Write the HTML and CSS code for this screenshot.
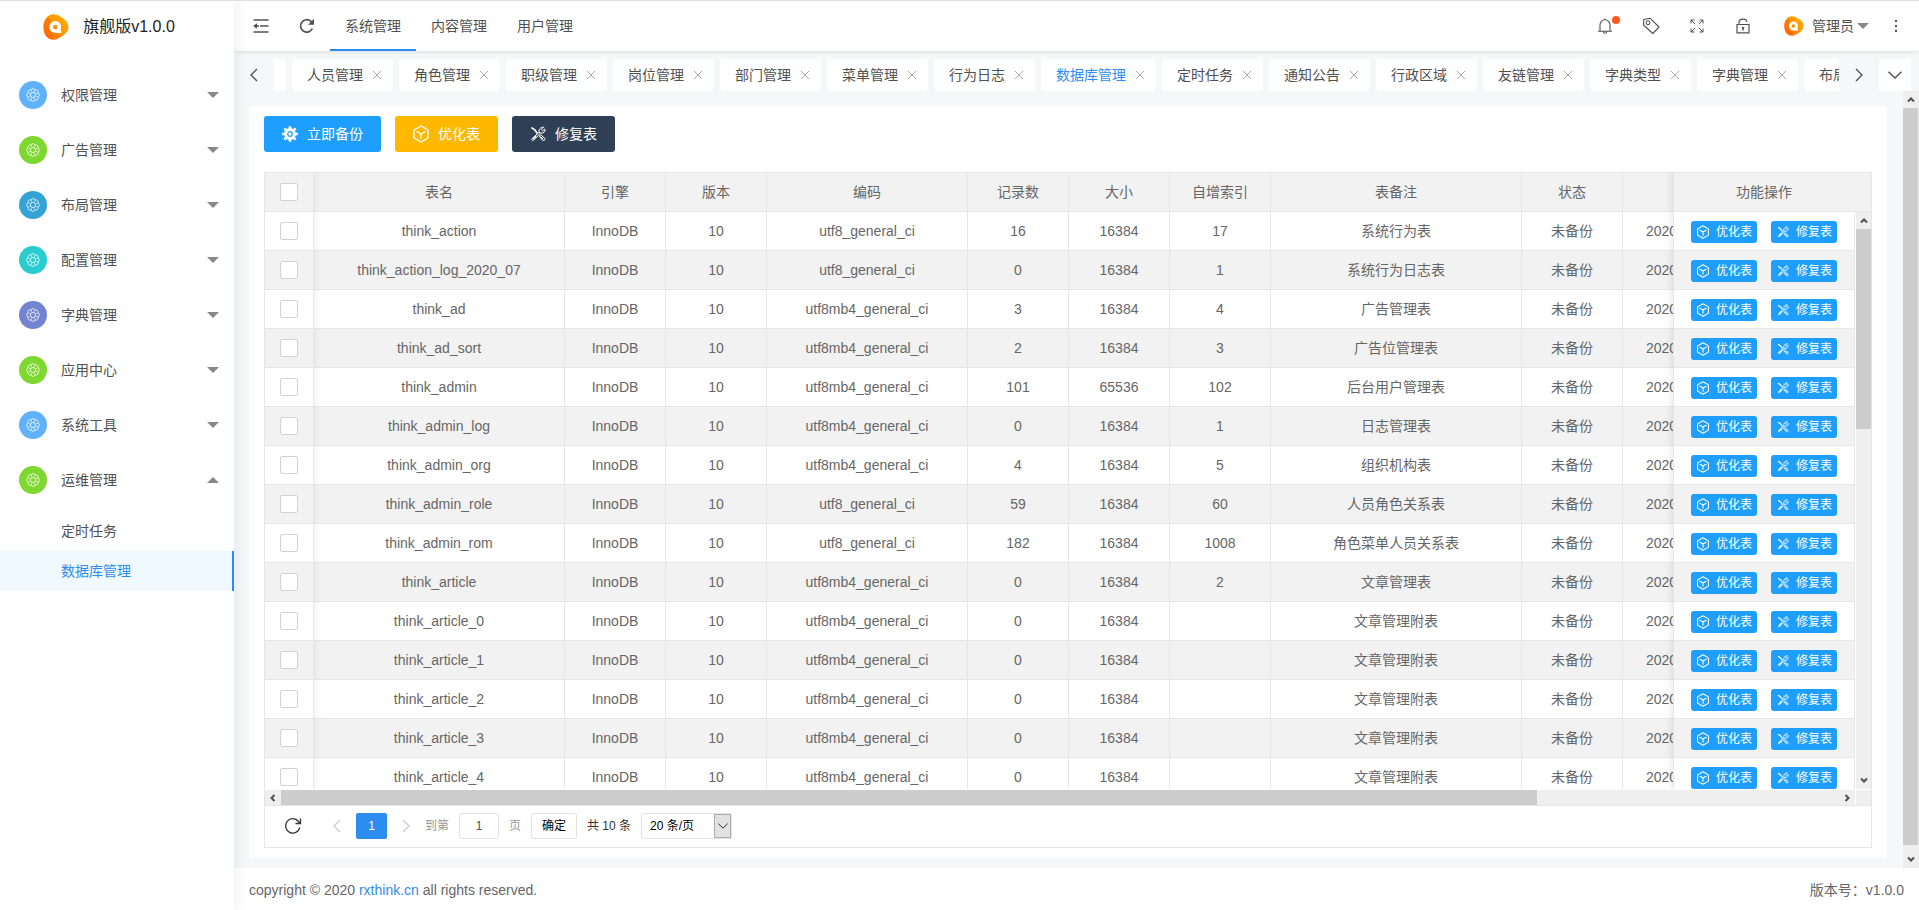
FILE: index.html
```html
<!DOCTYPE html>
<html lang="zh-CN">
<head>
<meta charset="utf-8">
<title>数据库管理</title>
<link rel="stylesheet" href="styles.css">
</head>
<body>
<svg class="sprite" aria-hidden="true">
  <defs>
    <linearGradient id="flame" x1="1" y1="0" x2="0" y2="1">
      <stop offset="0" stop-color="#ffb400"/><stop offset="0.5" stop-color="#ff9400"/><stop offset="1" stop-color="#ff5a00"/>
    </linearGradient>
    <symbol id="logo" viewBox="0 0 26 26">
      <path d="M10 .3C13 .1 16 1.600 20 4.200 23.500 6.600 25.500 9.500 25.500 12.800c0 3.400-2 6.200-5.500 8.800-3.600 2.700-7 4.400-10 4.200-5-.3-9.500-4.800-9.500-12.800S5 .6 10 .3z" fill="url(#flame)"/>
      <path d="M2.500 6C6 2 9 5 7 10c-1.800 4.500-.5 9.500 4 11l-3 4.500C3 24 .500 19.500.500 13c0-2.800.8-5.200 2-7z" fill="#ff6a00" opacity=".55"/>
      <circle cx="12.300" cy="13" r="4.100" fill="none" stroke="#fff" stroke-width="3.600"/>
      <path d="M12.500 16.300h5.800v2.600h-5.800z" fill="#fff"/>
    </symbol>
    <symbol id="flower" viewBox="0 0 16 16">
      <g fill="none" stroke="currentColor" stroke-width=".9">
        <path d="M13.540 10.300A2.400 2.400 0 0 1 10.300 13.540 2.400 2.400 0 0 1 5.700 13.540 2.400 2.400 0 0 1 2.460 10.300 2.400 2.400 0 0 1 2.460 5.700 2.400 2.400 0 0 1 5.700 2.460 2.400 2.400 0 0 1 10.300 2.460 2.400 2.400 0 0 1 13.540 5.700 2.400 2.400 0 0 1 13.540 10.300z"/>
        <circle cx="8" cy="8" r="3"/>
        <path d="M11.200 9.300l2.300 1M9.300 11.200l1 2.300M6.700 11.200l-1 2.300M4.800 9.300l-2.300 1M4.800 6.700l-2.300-1M6.700 4.800l-1-2.300M9.300 4.800l1-2.300M11.200 6.700l2.300-1" opacity=".7"/>
      </g>
    </symbol>
    <symbol id="gear" viewBox="0 0 16 16">
      <g fill="none" stroke="currentColor">
        <circle cx="8" cy="8" r="4.400" stroke-width="3"/>
        <path stroke-width="2.600" d="M8 .2v3M8 12.800v3M.2 8h3M12.800 8h3M2.400 2.400l2.200 2.200M11.400 11.400l2.200 2.200M2.400 13.600l2.200-2.200M11.400 4.600l2.200-2.200"/>
      </g>
      <circle cx="8" cy="8" r="1.700" fill="currentColor"/>
    </symbol>
    <symbol id="cube" viewBox="0 0 16 18">
      <g fill="none" stroke="currentColor" stroke-width="1.400" stroke-linejoin="round" stroke-linecap="round">
        <path d="M8 1l7 4v8l-7 4-7-4V5z"/><path d="M4 6.700L8 9l4-2.300M8 9v4.200"/>
      </g>
    </symbol>
    <symbol id="tools" viewBox="0 0 16 16">
      <g fill="none" stroke="currentColor" stroke-linecap="round" stroke-width="1">
        <path stroke-width="1.700" d="M2 2l2.800 1.800L7 7"/>
        <path d="M9.500 9.800l1.300-1 4 3.700c.8 1.200-.8 2.700-2 2z"/>
        <path d="M11 11l2 2"/>
        <path d="M9 6.300L2 12.800c-1 1 .5 2.500 1.500 1.500L10 7.500M13.200 1.200l-2 2.300 1.300 1.300L14.900 3c.5 2.400-1.200 4.300-3.700 4.200L9 6.300C8.500 3.500 10.500 1 13.200 1.200z"/>
        <path d="M5.600 10.200L3.500 12.500" stroke-width="1.700"/>
      </g>
    </symbol>
    <symbol id="cross" viewBox="0 0 10 10"><path d="M1 1l8 8M9 1L1 9" fill="none" stroke="currentColor"/></symbol>
    <symbol id="left" viewBox="0 0 8 14"><path d="M7 1L1 7l6 6" fill="none" stroke="currentColor" stroke-width="1.400"/></symbol>
    <symbol id="right" viewBox="0 0 8 14"><path d="M1 1l6 6-6 6" fill="none" stroke="currentColor" stroke-width="1.400"/></symbol>
    <symbol id="down" viewBox="0 0 14 8"><path d="M.5.700L7 7 13.500.700" fill="none" stroke="currentColor" stroke-width="1.400"/></symbol>
    <symbol id="caret" viewBox="0 0 12 6"><path d="M0 0h12L6 6z" fill="currentColor"/></symbol>
    <symbol id="chevron" viewBox="0 0 8 6"><path d="M1 4.500l3-3 3 3" fill="none" stroke="currentColor" stroke-width="2"/></symbol>
  </defs>
</svg>

<div class="app">
  <aside class="sidebar">
    <div class="brand"><svg class="brand-logo"><use href="#logo"/></svg><span>旗舰版v1.0.0</span></div>
    <nav class="menu">
      <a class="menu-item" href="#"><i class="dot sky"><svg><use href="#flower"/></svg></i><span>权限管理</span><svg class="caret"><use href="#caret"/></svg></a>
      <a class="menu-item" href="#"><i class="dot green"><svg><use href="#flower"/></svg></i><span>广告管理</span><svg class="caret"><use href="#caret"/></svg></a>
      <a class="menu-item" href="#"><i class="dot ocean"><svg><use href="#flower"/></svg></i><span>布局管理</span><svg class="caret"><use href="#caret"/></svg></a>
      <a class="menu-item" href="#"><i class="dot cyan"><svg><use href="#flower"/></svg></i><span>配置管理</span><svg class="caret"><use href="#caret"/></svg></a>
      <a class="menu-item" href="#"><i class="dot violet"><svg><use href="#flower"/></svg></i><span>字典管理</span><svg class="caret"><use href="#caret"/></svg></a>
      <a class="menu-item" href="#"><i class="dot green"><svg><use href="#flower"/></svg></i><span>应用中心</span><svg class="caret"><use href="#caret"/></svg></a>
      <a class="menu-item" href="#"><i class="dot sky"><svg><use href="#flower"/></svg></i><span>系统工具</span><svg class="caret"><use href="#caret"/></svg></a>
      <a class="menu-item" href="#"><i class="dot green"><svg><use href="#flower"/></svg></i><span>运维管理</span><svg class="caret up"><use href="#caret"/></svg></a>
      <div class="submenu">
        <a href="#">定时任务</a>
        <a class="active" href="#">数据库管理</a>
      </div>
    </nav>
  </aside>

  <div class="main">
    <header class="topbar">
      <button class="icon-btn" type="button" aria-label="收起菜单"><svg width="16" height="14" viewBox="0 0 16 14" fill="none" stroke="currentColor" stroke-width="1.500"><path d="M.5 1h15M7 7h8.500M.5 13h15"/><path d="M0 7l4-2.700v5.400z" fill="currentColor" stroke="none"/><path d="M3 7h3"/></svg></button>
      <button class="icon-btn" type="button" aria-label="刷新"><svg width="16" height="16" viewBox="0 0 16 16" fill="none" stroke="currentColor" stroke-width="1.700"><path d="M13.400 10.500A6.200 6.200 0 1 1 12 3.400L13.500 5"/><path d="M15 .8v6H9z" fill="currentColor" stroke="none"/></svg></button>
      <nav class="topnav">
        <a class="active" href="#">系统管理</a><a href="#">内容管理</a><a href="#">用户管理</a>
      </nav>
      <div class="tools">
        <button class="icon-btn" type="button" aria-label="消息"><svg width="16" height="16" viewBox="0 0 16 16" fill="none" stroke="currentColor" stroke-width="1.100"><path d="M1 13.300h14M3 13V6.800a5 5 0 0 1 10 0V13M6.200 13.500c.4 2.400 3.200 2.400 3.600 0M8 .5v1.300"/></svg><span class="badge"></span></button>
        <button class="icon-btn" type="button" aria-label="标签"><svg width="18" height="18" viewBox="0 0 18 18" fill="none" stroke="currentColor" stroke-width="1.100"><path d="M1.800 2.500L8 1.200l9 8.800-6.200 6.500L1.500 8z" stroke-linejoin="round"/><circle cx="6" cy="5.700" r="1.900"/></svg></button>
        <button class="icon-btn" type="button" aria-label="全屏"><svg width="14" height="14" viewBox="0 0 14 14" fill="none" stroke="currentColor" stroke-width="1"><path d="M1 4.500V1h3.500M1 1l4 4M9.500 1H13v3.500M13 1L9 5M1 9.500V13h3.500M1 13l4-4M9.500 13H13V9.500M13 13L9 9"/></svg></button>
        <button class="icon-btn" type="button" aria-label="锁屏"><svg width="14" height="16" viewBox="0 0 14 16" fill="none" stroke="currentColor" stroke-width="1.200"><path d="M1 6.500h12v8.300H1zM3 6V4.500C3 .1 10.500.1 11 4"/><path d="M7 9v3.500M5.800 9.800h2.400" stroke-width="1.500"/></svg></button>
        <button class="user" type="button"><svg class="avatar"><use href="#logo"/></svg><span>管理员</span><svg class="caret"><use href="#caret"/></svg></button>
        <button class="icon-btn" type="button" aria-label="更多"><svg width="4" height="14" viewBox="0 0 4 14" fill="currentColor"><path d="M1 1h2v2H1zM1 6h2v2H1zM1 11h2v2H1z"/></svg></button>
      </div>
    </header>

    <div class="tabbar">
      <button class="tab-ctl" type="button" aria-label="向左"><svg width="8" height="14"><use href="#left"/></svg></button>
      <div class="tabs">
        <span class="tab stub"></span>
        <span class="tab"><a href="#">人员管理</a><button type="button" aria-label="关闭"><svg><use href="#cross"/></svg></button></span>
        <span class="tab"><a href="#">角色管理</a><button type="button" aria-label="关闭"><svg><use href="#cross"/></svg></button></span>
        <span class="tab"><a href="#">职级管理</a><button type="button" aria-label="关闭"><svg><use href="#cross"/></svg></button></span>
        <span class="tab"><a href="#">岗位管理</a><button type="button" aria-label="关闭"><svg><use href="#cross"/></svg></button></span>
        <span class="tab"><a href="#">部门管理</a><button type="button" aria-label="关闭"><svg><use href="#cross"/></svg></button></span>
        <span class="tab"><a href="#">菜单管理</a><button type="button" aria-label="关闭"><svg><use href="#cross"/></svg></button></span>
        <span class="tab"><a href="#">行为日志</a><button type="button" aria-label="关闭"><svg><use href="#cross"/></svg></button></span>
        <span class="tab active"><a href="#">数据库管理</a><button type="button" aria-label="关闭"><svg><use href="#cross"/></svg></button></span>
        <span class="tab"><a href="#">定时任务</a><button type="button" aria-label="关闭"><svg><use href="#cross"/></svg></button></span>
        <span class="tab"><a href="#">通知公告</a><button type="button" aria-label="关闭"><svg><use href="#cross"/></svg></button></span>
        <span class="tab"><a href="#">行政区域</a><button type="button" aria-label="关闭"><svg><use href="#cross"/></svg></button></span>
        <span class="tab"><a href="#">友链管理</a><button type="button" aria-label="关闭"><svg><use href="#cross"/></svg></button></span>
        <span class="tab"><a href="#">字典类型</a><button type="button" aria-label="关闭"><svg><use href="#cross"/></svg></button></span>
        <span class="tab"><a href="#">字典管理</a><button type="button" aria-label="关闭"><svg><use href="#cross"/></svg></button></span>
        <span class="tab"><a href="#">布局管理</a><button type="button" aria-label="关闭"><svg><use href="#cross"/></svg></button></span>
      </div>
      <button class="tab-ctl" type="button" aria-label="向右"><svg width="8" height="14"><use href="#right"/></svg></button>
      <button class="tab-ctl white" type="button" aria-label="标签菜单"><svg width="14" height="8"><use href="#down"/></svg></button>
    </div>

    <div class="workspace">
      <main class="content">
        <section class="card">
          <div class="actions">
            <button class="btn blue" type="button"><svg width="16" height="16"><use href="#gear"/></svg>立即备份</button>
            <button class="btn amber" type="button"><svg width="16" height="18"><use href="#cube"/></svg>优化表</button>
            <button class="btn navy" type="button"><svg width="16" height="16"><use href="#tools"/></svg>修复表</button>
          </div>

          <div class="table-view">
            <div class="pane">
              <table class="grid data">
                <colgroup><col class="w-check"><col class="w-name"><col class="w-s"><col class="w-s"><col class="w-m"><col class="w-s"><col class="w-s"><col class="w-s"><col class="w-name"><col class="w-s"><col class="w-time"></colgroup>
                <thead><tr><th class="check"><input type="checkbox" aria-label="全选"></th><th>表名</th><th>引擎</th><th>版本</th><th>编码</th><th>记录数</th><th>大小</th><th>自增索引</th><th>表备注</th><th>状态</th><th></th></tr></thead>
                <tbody id="rows"></tbody>
              </table>
            </div>
            <div class="pane fixed">
              <table class="grid ops-head"><thead><tr><th>功能操作</th></tr></thead></table>
              <div class="fixed-body">
                <table class="grid ops"><tbody id="ops"></tbody></table>
                <div class="scroll v inner"><svg class="arr"><use href="#chevron"/></svg><div class="thumb"></div><svg class="arr flip"><use href="#chevron"/></svg></div>
              </div>
            </div>
            <div class="hscroll">
              <div class="scroll h"><svg class="arr ccw"><use href="#chevron"/></svg><div class="thumb"></div><svg class="arr cw"><use href="#chevron"/></svg></div>
              <div class="corner"></div>
            </div>
            <div class="pager">
              <button class="reload" type="button" aria-label="刷新表格"><svg width="18" height="18" viewBox="0 0 18 18" fill="none" stroke="currentColor" stroke-width="1.300"><path d="M15.800 10.500A7.200 7.200 0 1 1 14.500 4.500l1.700 1.800M16.500 1.500v5h-5"/></svg></button>
              <button class="step" type="button" aria-label="上一页"><svg width="8" height="14"><use href="#left"/></svg></button>
              <button class="page" type="button">1</button>
              <button class="step" type="button" aria-label="下一页"><svg width="8" height="14"><use href="#right"/></svg></button>
              <label class="jump"><span>到第</span><input type="text" value="1"><span>页</span></label>
              <button class="confirm" type="button">确定</button>
              <span class="total">共 10 条</span>
              <span class="limit"><select aria-label="每页条数"><option>20 条/页</option></select><i><svg width="10" height="6"><use href="#down"/></svg></i></span>
            </div>
          </div>
        </section>
      </main>
      <div class="scroll v outer"><svg class="arr"><use href="#chevron"/></svg><div class="thumb"></div><svg class="arr flip"><use href="#chevron"/></svg></div>
    </div>

    <footer class="footer"><span>copyright © 2020 <a href="#">rxthink.cn</a> all rights reserved.</span><span>版本号：v1.0.0</span></footer>
  </div>
</div>
<script src="script.js"></script>
</body>
</html>
```
FILE: styles.css
```css
* { box-sizing: border-box; }
body {
  margin: 0;
  font: 14px/24px "Liberation Sans", "Noto Sans CJK SC", sans-serif;
  color: #515151;
  background: #f5f7f9;
}
a { color: inherit; text-decoration: none; }
button, input, select { font: inherit; color: inherit; }
button { margin: 0; padding: 0; border: 0; background: none; cursor: pointer; }
svg { display: block; flex: none; }
.sprite { position: absolute; width: 0; height: 0; }

.app { display: flex; height: 100vh; border-top: 1px solid #dedede; overflow: hidden; }

/* sidebar */
.sidebar { flex: none; width: 234px; background: #fff; box-shadow: 2px 0 12px rgba(29, 35, 41, .08); position: relative; z-index: 3; }
.brand { display: flex; align-items: center; justify-content: center; gap: 14px; height: 52px; padding-right: 16px; font-size: 16px; color: #222; }
.brand-logo { width: 26px; height: 26px; }
.menu { padding-top: 14px; }
.menu-item { display: flex; align-items: center; gap: 14px; height: 55px; padding: 0 15px 0 19px; }
.menu-item .caret { margin-left: auto; }
.caret { width: 12px; height: 6px; color: #888; }
.caret.up { transform: rotate(180deg); }
.dot { display: grid; place-items: center; width: 28px; height: 28px; border-radius: 50%; color: #fff; }
.dot svg { width: 14px; height: 14px; }
.sky { background: #60b2ff; }
.green { background: #7ed830; }
.ocean { background: #33a2d6; }
.cyan { background: #29cdcf; }
.violet { background: #7284d0; }
.submenu { padding-top: 4px; }
.submenu a { display: block; height: 40px; line-height: 40px; padding-left: 61px; }
.submenu a.active { color: #2d8cf0; background: #f0f9ff; border-right: 2px solid #2d8cf0; }

/* top bar */
.main { flex: 1; min-width: 0; display: flex; flex-direction: column; }
.topbar { flex: none; display: flex; height: 50px; padding-left: 4px; background: #fff; box-shadow: 0 1px 4px rgba(0, 21, 41, .1); position: relative; z-index: 2; }
.icon-btn { display: grid; place-items: center; width: 46px; height: 50px; position: relative; }
.badge { position: absolute; left: 30px; top: 15px; width: 8px; height: 8px; border-radius: 50%; background: #ff5722; }
.topnav { display: flex; }
.topnav a { height: 50px; padding: 0 15px; line-height: 50px; }
.topnav a.active { border-bottom: 2px solid #2d8cf0; }
.tools { display: flex; margin-left: auto; }
.user { display: flex; align-items: center; width: 107px; padding-left: 18px; }
.avatar { width: 20px; height: 20px; margin-right: 8px; }
.user .caret { margin-left: 3px; }

/* tab strip */
.tabbar { flex: none; display: flex; height: 40px; padding: 8px 8px 0 0; }
.tab-ctl { flex: none; display: grid; place-items: center; width: 40px; height: 32px; }
.tab-ctl.white { width: 32px; background: #fff; border-radius: 2px; }
.tabs { flex: 1; min-width: 0; display: flex; gap: 6px; overflow: hidden; }
.tab { flex: none; display: flex; align-items: center; gap: 9px; height: 32px; padding: 0 11px 0 15px; background: #fff; border-radius: 3px; }
.tab.stub { width: 12px; padding: 0; border-radius: 0 3px 3px 0; }
.tab.active { color: #2d8cf0; }
.tab button { color: #aaa; }
.tab svg { width: 10px; height: 10px; }

/* workspace */
.workspace { flex: 1; min-height: 0; display: flex; }
.content { flex: 1; min-width: 0; padding: 15px 16px 10px 15px; display: flex; }
.card { flex: 1; min-width: 0; display: flex; flex-direction: column; gap: 20px; padding: 10px 15px; background: #fff; border-radius: 4px; }
.actions { display: flex; gap: 14px; }
.btn { display: flex; align-items: center; gap: 9px; height: 36px; padding: 0 18px; border-radius: 3px; color: #fff; white-space: nowrap; }
.blue { background: #1e9fff; }
.amber { background: #ffb800; }
.navy { background: #2f4056; }

.table-view { flex: 1; min-height: 0; display: grid; grid-template-columns: minmax(0, 1fr) 198px; grid-template-rows: minmax(0, 1fr) 16px 42px; border: 1px solid #e6e6e6; color: #666; }
.pane { min-width: 0; overflow: hidden; }
.grid { table-layout: fixed; border-collapse: separate; border-spacing: 0; text-align: center; }
.grid th, .grid td { height: 39px; padding: 0; border: solid #e6e6e6; border-width: 0 1px 1px 0; font-weight: 400; white-space: nowrap; }
.grid th, .grid tbody tr:nth-child(even) { background: #f2f2f2; }
.data { width: 1538px; }
.data td:last-child { text-align: left; padding-left: 23px; }
.w-check { width: 49px; }
.w-name { width: 251px; }
.w-s { width: 101px; }
.w-m { width: 201px; }
.w-time { width: 180px; }
.check { position: relative; }
.check::after { content: ""; position: absolute; left: calc(100% + 1px); top: 0; bottom: -1px; width: 7px; background: linear-gradient(to right, rgba(0, 0, 0, .04), transparent); }
input[type="checkbox"] { appearance: none; display: block; width: 18px; height: 18px; margin: 0 auto; border: 1px solid #d2d2d2; border-radius: 2px; background: #fff; }
.pane.fixed { display: flex; flex-direction: column; overflow: visible; background: #fff; border-left: 1px solid #e6e6e6; box-shadow: -1px 0 8px rgba(0, 0, 0, .1); clip-path: inset(0 0 0 -12px); position: relative; }
.ops-head { width: 100%; flex: none; }
.ops-head th { border-right: 0; padding-right: 17px; }
.fixed-body { flex: 1; min-height: 0; display: flex; gap: 1px; overflow: hidden; }
.ops { width: 181px; }
.ops div { display: flex; justify-content: center; gap: 14px; padding-top: 2px; }
.mini { display: flex; align-items: center; gap: 6px; height: 22px; padding: 0 5px; border-radius: 3px; background: #1e9fff; color: #fff; font-size: 12px; line-height: 22px; }

/* scrollbars */
.scroll { display: flex; background: #efefef; }
.scroll .arr { width: 8px; height: 6px; color: #505050; }
.scroll .thumb { background: #cdcdcd; }
.scroll.v { flex: none; flex-direction: column; align-items: stretch; width: 15px; }
.scroll.v .arr { margin: 6px auto 5px 4px; }
.scroll.v .flip { margin: auto auto 6px 4px; }
.scroll.h { flex: 1; align-items: center; }
.scroll.h .arr { margin: 0 4px; }
.scroll.h .thumb { width: 79%; height: 100%; }
.scroll.h .cw { margin-left: auto; }
.inner .thumb { height: 200px; }
.scroll.outer { width: 16px; }
.outer .thumb { flex: 1; margin-right: 1px; }
.scroll.outer .flip { margin: 11px auto 6px 4px; }
.flip { transform: rotate(180deg); }
.ccw { transform: rotate(-90deg); }
.cw { transform: rotate(90deg); }
.hscroll { grid-column: 1 / -1; display: flex; border-top: 1px solid #fff; }
.corner { width: 16px; border-left: 1px solid #fff; background: #efefef; }

/* pager */
.pager { grid-column: 1 / -1; display: flex; align-items: center; gap: 10px; padding: 0 0 2px 19px; border-top: 1px solid #e6e6e6; font-size: 12px; color: #333; }
.reload { margin-right: 16px; }
.step { display: grid; place-items: center; width: 26px; height: 26px; margin: 0 -4px; color: #ccc; }
.page { width: 31px; height: 26px; border-radius: 2px; background: #2d8cf0; color: #fff; }
.jump { display: flex; align-items: center; gap: 10px; color: #999; }
.jump input { width: 40px; height: 26px; padding: 0; border: 1px solid #e2e2e2; border-radius: 3px; background: #fff; color: #555; text-align: center; }
.confirm { width: 46px; height: 26px; border: 1px solid #e2e2e2; border-radius: 2px; color: #000; }
.limit { position: relative; }
.limit select { appearance: none; display: block; width: 91px; height: 26px; padding: 0 0 0 8px; border: 1px solid #e2e2e2; border-radius: 2px; background: #fff; color: #000; }
.limit i { position: absolute; right: 1px; top: 1px; width: 17px; height: 24px; display: grid; place-items: center; border: 1px solid #adadad; background: #e1e1e1; pointer-events: none; }

.footer { flex: none; display: flex; align-items: center; justify-content: space-between; height: 42px; padding: 2px 15px 0; background: #fff; color: #666; }
.footer a { color: #2d8cf0; }
```
FILE: script.js
```js
const tables = [
  ["think_action", "utf8_general_ci", 16, 16384, 17, "系统行为表"],
  ["think_action_log_2020_07", "utf8_general_ci", 0, 16384, 1, "系统行为日志表"],
  ["think_ad", "utf8mb4_general_ci", 3, 16384, 4, "广告管理表"],
  ["think_ad_sort", "utf8mb4_general_ci", 2, 16384, 3, "广告位管理表"],
  ["think_admin", "utf8mb4_general_ci", 101, 65536, 102, "后台用户管理表"],
  ["think_admin_log", "utf8mb4_general_ci", 0, 16384, 1, "日志管理表"],
  ["think_admin_org", "utf8mb4_general_ci", 4, 16384, 5, "组织机构表"],
  ["think_admin_role", "utf8_general_ci", 59, 16384, 60, "人员角色关系表"],
  ["think_admin_rom", "utf8_general_ci", 182, 16384, 1008, "角色菜单人员关系表"],
  ["think_article", "utf8mb4_general_ci", 0, 16384, 2, "文章管理表"],
  ["think_article_0", "utf8mb4_general_ci", 0, 16384, "", "文章管理附表"],
  ["think_article_1", "utf8mb4_general_ci", 0, 16384, "", "文章管理附表"],
  ["think_article_2", "utf8mb4_general_ci", 0, 16384, "", "文章管理附表"],
  ["think_article_3", "utf8mb4_general_ci", 0, 16384, "", "文章管理附表"],
  ["think_article_4", "utf8mb4_general_ci", 0, 16384, "", "文章管理附表"]
];

document.getElementById("rows").innerHTML = tables.map(([name, charset, count, size, next, note]) => `
  <tr>
    <td class="check"><input type="checkbox" aria-label="${name}"></td>
    <td>${name}</td><td>InnoDB</td><td>10</td><td>${charset}</td><td>${count}</td>
    <td>${size}</td><td>${next}</td><td>${note}</td><td>未备份</td><td>2020</td>
  </tr>`).join("");

document.getElementById("ops").innerHTML = tables.map(() => `
  <tr><td><div>
    <button class="mini" type="button"><svg width="14" height="14"><use href="#cube"/></svg>优化表</button>
    <button class="mini" type="button"><svg width="14" height="12"><use href="#tools"/></svg>修复表</button>
  </div></td></tr>`).join("");
```
